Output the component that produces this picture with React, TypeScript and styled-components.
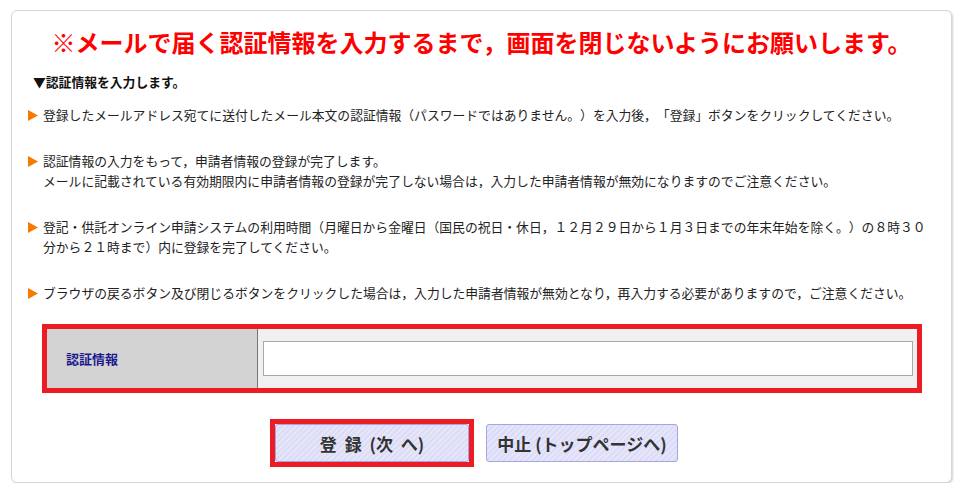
import React from "react";
import styled, { createGlobalStyle } from "styled-components";

const GlobalStyle = createGlobalStyle`
  html, body {
    margin: 0;
    padding: 0;
    background: #ffffff;
  }
  body {
    font-family: "Noto Sans CJK JP", "Noto Sans", sans-serif;
    color: #222222;
    text-spacing-trim: space-all;
  }
`;

const Page = styled.div`
  padding: 10px 0 0 11px;
`;

const Panel = styled.div`
  box-sizing: border-box;
  width: 941px;
  height: 473px;
  border: 1px solid #d6d6d6;
  border-radius: 6px;
  box-shadow: 1px 1px 2px rgba(0, 0, 0, 0.18);
  background: #ffffff;
  padding: 16px 0 0 0;
  display: flex;
  flex-direction: column;
`;

const Title = styled.h1`
  margin: 0;
  font-size: 24px;
  line-height: 29px;
  font-weight: 700;
  color: #ff0000;
  text-align: center;
  letter-spacing: 0;
`;

const Heading = styled.h2`
  margin: 16px 0 0 21px;
  font-size: 12.8px;
  line-height: 20px;
  font-weight: 700;
  color: #111111;
`;

const NoteList = styled.ul`
  list-style: none;
  margin: 13px 0 0 16px;
  padding: 0;
  display: flex;
  flex-direction: column;
  gap: 26px;
`;

const NoteItem = styled.li`
  display: flex;
  align-items: flex-start;
  font-size: 12.8px;
  line-height: 20px;
  color: #222222;
`;

const Marker = styled.span`
  flex: 0 0 15px;
  height: 20px;
  display: flex;
  align-items: center;
`;

const NoteText = styled.p`
  margin: 0;
  width: 889px;
  text-spacing-trim: space-all;
`;

const FormTable = styled.div`
  box-sizing: border-box;
  margin: 21px 0 0 30px;
  width: 880px;
  border: 5px solid #ec1c24;
  display: flex;
`;

const LabelCell = styled.div`
  box-sizing: border-box;
  width: 211px;
  background: #d3d3d3;
  border-right: 1px solid #777777;
  padding-left: 19px;
  display: flex;
  align-items: center;
  font-size: 13px;
  font-weight: 700;
  color: #1a1a8c;
`;

const InputCell = styled.div`
  flex: 1;
  background: #f0f0f0;
  padding: 12px 4px 12px 5px;
`;

const TextInput = styled.input`
  box-sizing: border-box;
  display: block;
  width: 100%;
  height: 35px;
  border: 1px solid #a9a9a9;
  background: #ffffff;
  font-size: 14px;
  font-family: inherit;
  padding: 0 6px;
  outline: none;
`;

const ButtonRow = styled.div`
  margin: 26px 0 0 258px;
  display: flex;
  align-items: center;
  gap: 12px;
`;

const Highlight = styled.div`
  border: 5px solid #ec1c24;
  display: flex;
`;

const ActionButton = styled.button<{ $w: number; $spread?: boolean }>`
  box-sizing: border-box;
  width: ${(p) => p.$w}px;
  height: 38px;
  border: 1px solid #a4a4e6;
  border-radius: 3px;
  background: repeating-linear-gradient(
    135deg,
    #dcdcf7 0px,
    #dcdcf7 2px,
    #e6e6fb 2px,
    #e6e6fb 4px
  );
  font-family: "Noto Sans CJK JP", "Noto Sans", sans-serif;
  font-size: 17px;
  font-weight: 700;
  color: #333333;
  word-spacing: ${(p) => (p.$spread ? "4px" : "0")};
  padding: 0;
  cursor: pointer;
  display: flex;
  align-items: center;
  justify-content: center;
`;

const Triangle = () => (
  <svg width="10" height="11" viewBox="0 0 10 11" aria-hidden="true">
    <polygon points="0,0 10,5.5 0,11" fill="#f47a00" />
  </svg>
);

const notes: React.ReactNode[] = [
  "登録したメールアドレス宛てに送付したメール本文の認証情報（パスワードではありません。）を入力後，「登録」ボタンをクリックしてください。",
  <>
    認証情報の入力をもって，申請者情報の登録が完了します。
    <br />
    メールに記載されている有効期限内に申請者情報の登録が完了しない場合は，入力した申請者情報が無効になりますのでご注意ください。
  </>,
  "登記・供託オンライン申請システムの利用時間（月曜日から金曜日（国民の祝日・休日，１２月２９日から１月３日までの年末年始を除く。）の８時３０分から２１時まで）内に登録を完了してください。",
  "ブラウザの戻るボタン及び閉じるボタンをクリックした場合は，入力した申請者情報が無効となり，再入力する必要がありますので，ご注意ください。",
];

export default function App() {
  return (
    <>
      <GlobalStyle />
      <Page>
        <Panel>
          <Title>※メールで届く認証情報を入力するまで，画面を閉じないようにお願いします。</Title>
          <Heading>▼認証情報を入力します。</Heading>
          <NoteList>
            {notes.map((n, i) => (
              <NoteItem key={i}>
                <Marker>
                  <Triangle />
                </Marker>
                <NoteText>{n}</NoteText>
              </NoteItem>
            ))}
          </NoteList>
          <FormTable>
            <LabelCell>認証情報</LabelCell>
            <InputCell>
              <TextInput type="text" aria-label="認証情報" />
            </InputCell>
          </FormTable>
          <ButtonRow>
            <Highlight>
              <ActionButton $w={194} $spread>
                登 録 (次 へ)
              </ActionButton>
            </Highlight>
            <ActionButton $w={192}>中止 (トップページへ)</ActionButton>
          </ButtonRow>
        </Panel>
      </Page>
    </>
  );
}
